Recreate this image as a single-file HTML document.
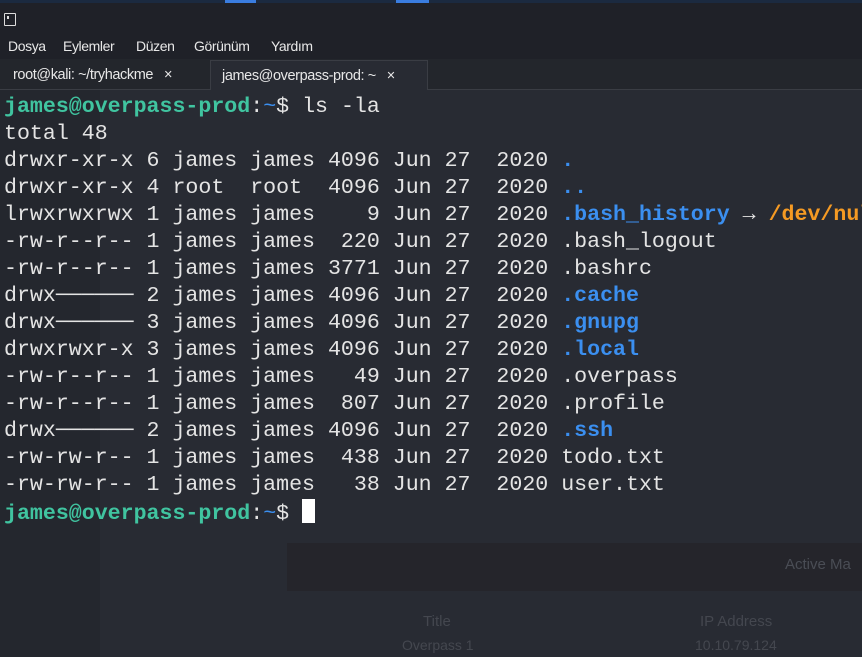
<!DOCTYPE html>
<html><head><meta charset="utf-8"><style>
*{margin:0;padding:0;box-sizing:border-box}
body{width:862px;height:657px;overflow:hidden;background:#282b33;font-family:"Liberation Sans",sans-serif;position:relative}
.top{position:absolute;left:0;top:0;width:862px;height:3px;background:#1b2a40}
.title{position:absolute;top:3px;left:0;width:862px;height:31px;background:#1f2128}
.menu{position:absolute;top:34px;left:0;width:862px;height:25px;background:#1f2128;color:#e8e8e8;font-size:14px;letter-spacing:-0.4px}
.menu span{position:absolute;top:4px}
.tabs{position:absolute;top:59px;left:0;width:862px;height:31px;background:#23262c;border-bottom:1px solid #3a3d44}
.tab{position:absolute;top:1px;height:30px;color:#e8e8e8;font-size:14.5px;letter-spacing:-0.4px;padding:7px 0 0 13px;white-space:nowrap}
.term{position:absolute;left:4px;top:94px;font-family:"Liberation Mono",monospace;font-size:21.6px;line-height:27px;color:#e4e4e4;white-space:pre}
.g{color:#40c4a0;font-weight:bold}.b{color:#3b8ff0;font-weight:bold}.o{color:#f59a23;font-weight:bold}.t{color:#3b8ff0}
.cur{display:inline-block;width:13px;height:24px;background:#fff;vertical-align:-4px}
.side{position:absolute;left:0;top:90px;width:100px;height:567px;background:#24272e}
</style></head><body>
<div class="side"></div>
<div style="position:absolute;left:287px;top:543px;width:575px;height:48px;background:#25252b"></div>
<div style="position:absolute;left:785px;top:556px;color:#4a4d55;font-size:15px">Active Ma</div>
<div style="position:absolute;left:423px;top:613px;color:#44474f;font-size:15px">Title</div>
<div style="position:absolute;left:700px;top:613px;color:#44474f;font-size:15px">IP Address</div>
<div style="position:absolute;left:402px;top:637px;color:#44474f;font-size:14px">Overpass 1</div>
<div style="position:absolute;left:695px;top:637px;color:#44474f;font-size:14px">10.10.79.124</div>
<div class="top"></div>
<div style="position:absolute;top:0;left:225px;width:31px;height:3px;background:#3a7de0"></div>
<div style="position:absolute;top:0;left:396px;width:33px;height:3px;background:#3a7de0"></div>
<div class="title"><div style="position:absolute;left:4px;top:10px;width:12px;height:13px;border:1px solid #ddd;border-radius:1px"><div style="position:absolute;left:2px;top:2px;width:2px;height:3px;background:#ddd"></div></div></div>
<div class="menu"><span style="left:8px">Dosya</span><span style="left:63px">Eylemler</span><span style="left:136px">Düzen</span><span style="left:194px">Görünüm</span><span style="left:271px">Yardım</span></div>
<div class="tabs">
<div class="tab" style="left:0;width:210px;">root@kali: ~/tryhackme&nbsp;&nbsp;&nbsp;×</div>
<div class="tab" style="left:210px;width:218px;border:1px solid #3a3d44;border-bottom:none;background:#282b33;padding-left:11px">james@overpass-prod: ~&nbsp;&nbsp;&nbsp;×</div>
</div>
<div class="term"><span class="g">james@overpass-prod</span>:<span class="t">~</span>$ ls -la
total 48
drwxr-xr-x 6 james james 4096 Jun 27  2020 <span class="b">.</span>
drwxr-xr-x 4 root  root  4096 Jun 27  2020 <span class="b">..</span>
lrwxrwxrwx 1 james james    9 Jun 27  2020 <span class="b">.bash_history</span> → <span class="o">/dev/null</span>
-rw-r--r-- 1 james james  220 Jun 27  2020 .bash_logout
-rw-r--r-- 1 james james 3771 Jun 27  2020 .bashrc
drwx────── 2 james james 4096 Jun 27  2020 <span class="b">.cache</span>
drwx────── 3 james james 4096 Jun 27  2020 <span class="b">.gnupg</span>
drwxrwxr-x 3 james james 4096 Jun 27  2020 <span class="b">.local</span>
-rw-r--r-- 1 james james   49 Jun 27  2020 .overpass
-rw-r--r-- 1 james james  807 Jun 27  2020 .profile
drwx────── 2 james james 4096 Jun 27  2020 <span class="b">.ssh</span>
-rw-rw-r-- 1 james james  438 Jun 27  2020 todo.txt
-rw-rw-r-- 1 james james   38 Jun 27  2020 user.txt
<span class="g">james@overpass-prod</span>:<span class="t">~</span>$ <span class="cur"></span></div>
</body></html>
